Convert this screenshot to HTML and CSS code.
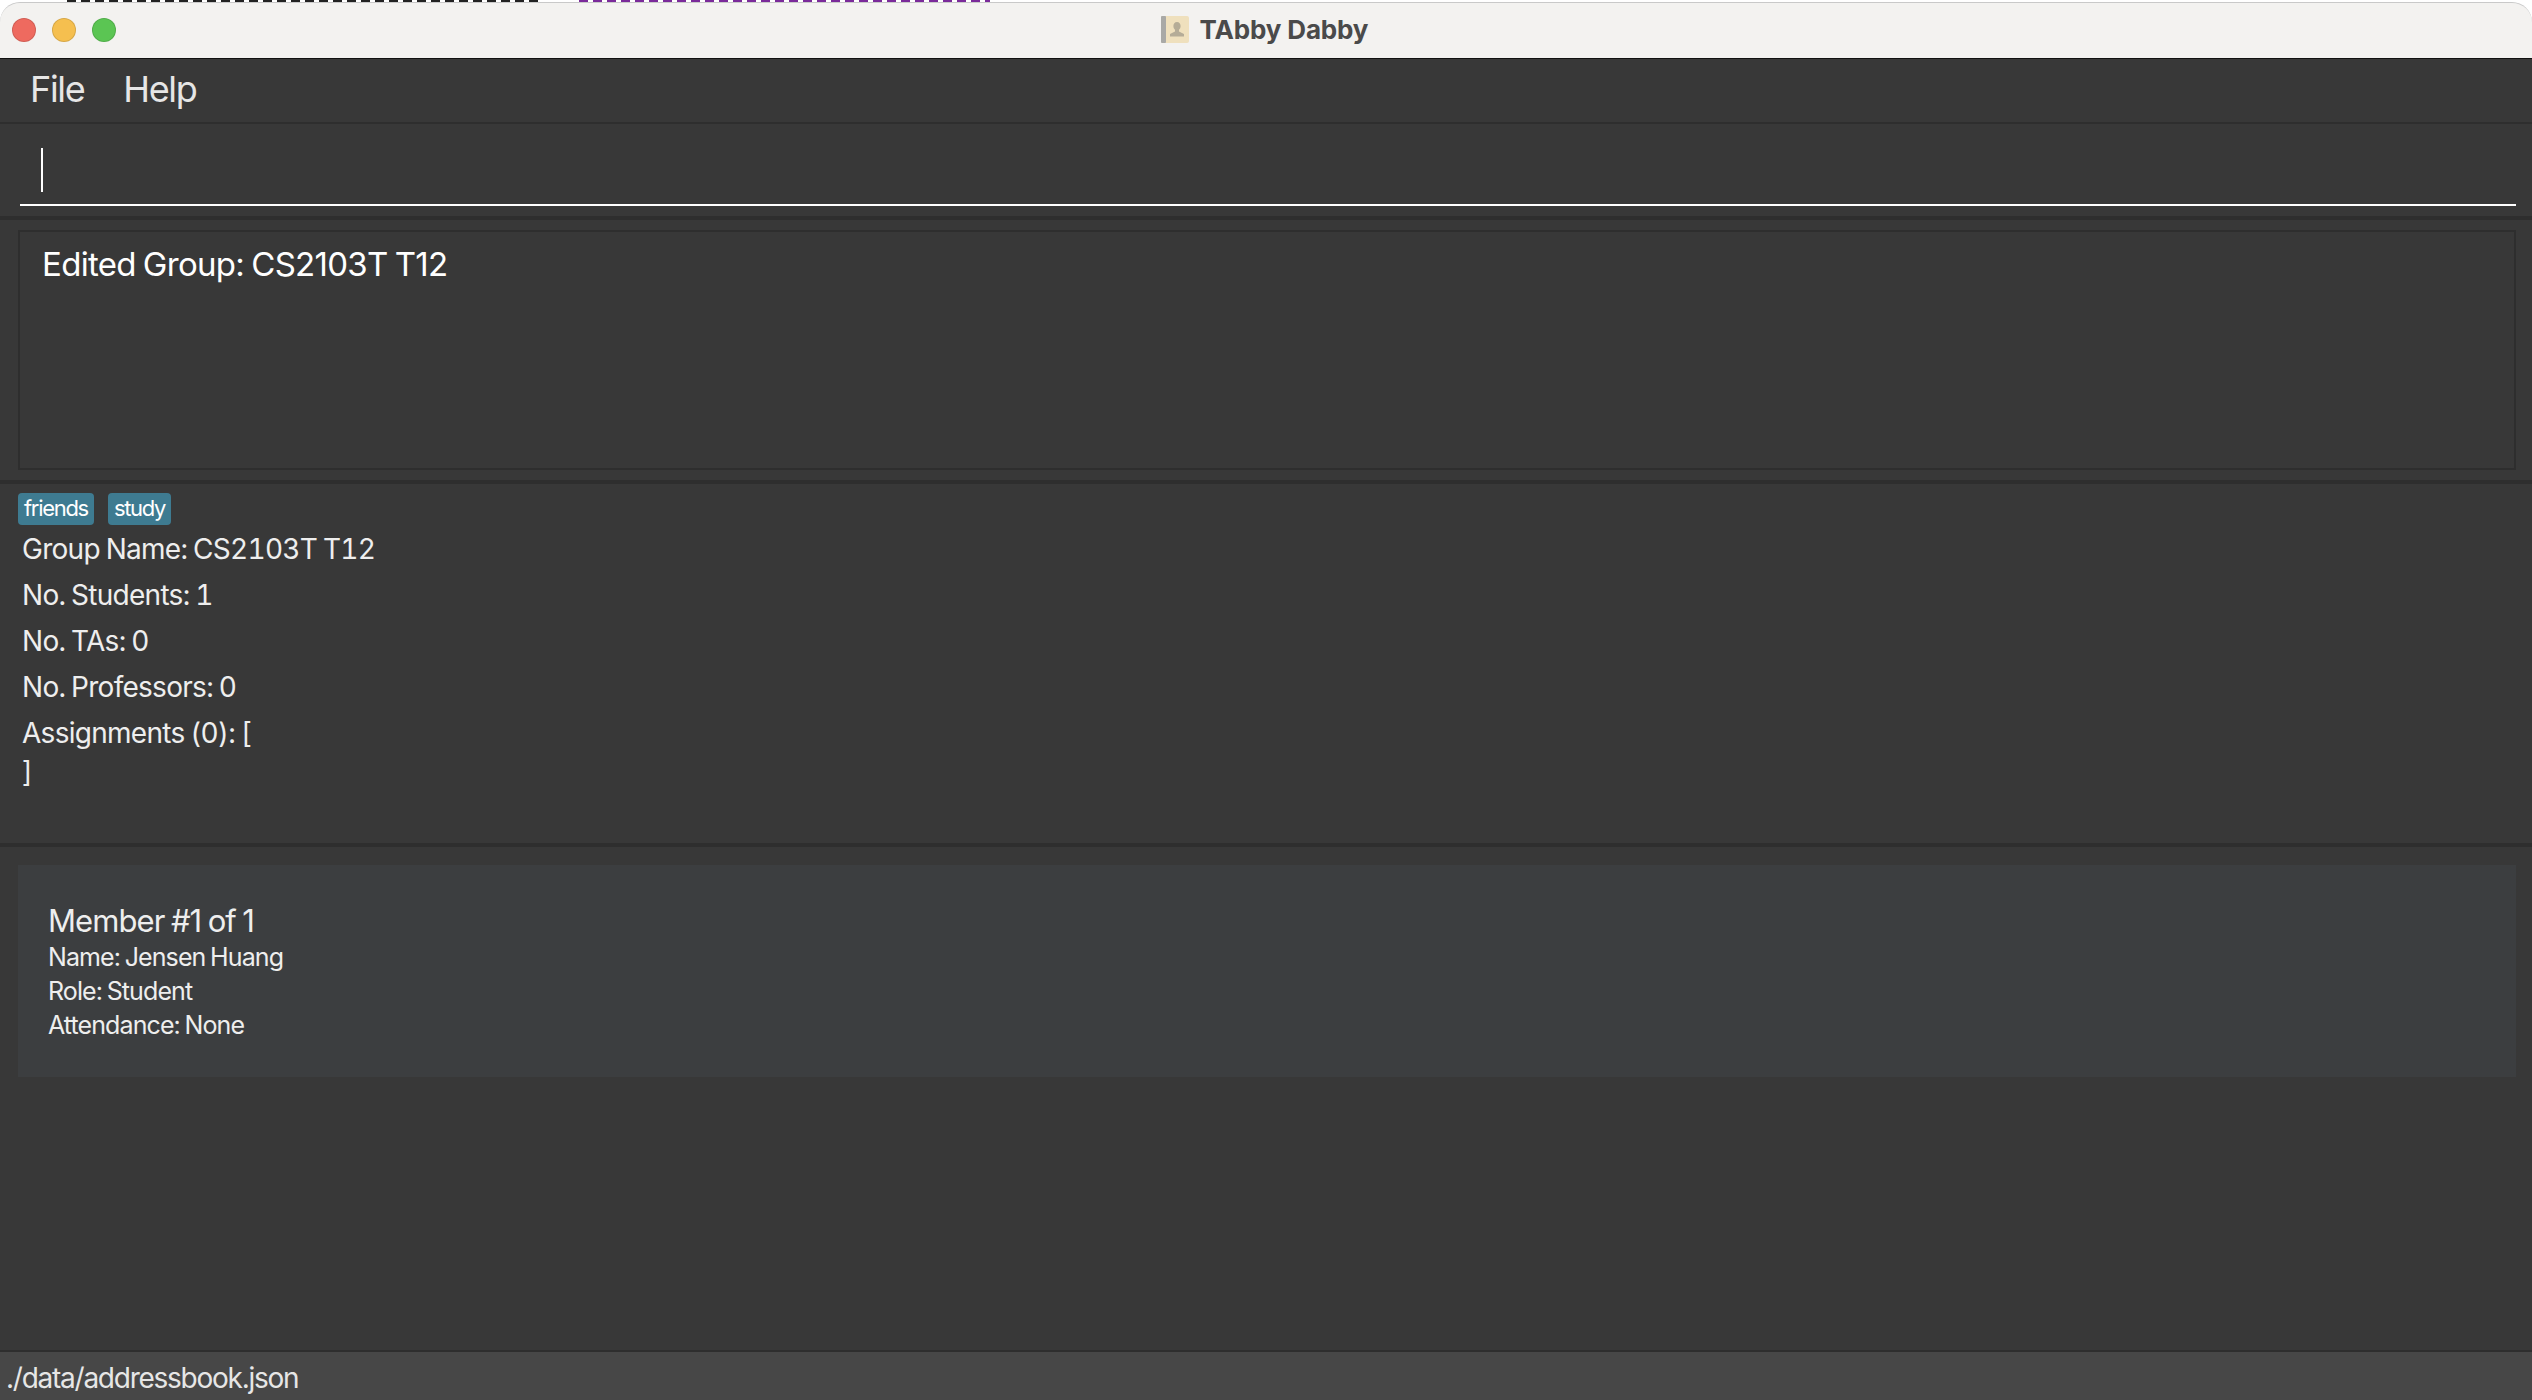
FILE: index.html
```html
<!DOCTYPE html>
<html lang="en">
<head>
    <meta charset="UTF-8">
    <title>TAbby Dabby</title>
    <link rel="stylesheet" href="styles.css">
</head>
<body>

    <div class="window">

        <!-- Sliver of the window behind -->
        <div class="backdrop"></div>

        <!-- Title bar -->
        <div class="title-bar">
            <div class="traffic-lights">
                <span class="light red"></span>
                <span class="light yellow"></span>
                <span class="light green"></span>
            </div>
            <div class="title">
                <svg class="title-icon" width="28" height="27" viewBox="0 0 28 27">
                    <rect x="0" y="0" width="28" height="27" rx="2" fill="#efe0bd"/>
                    <rect x="0" y="0" width="5" height="27" rx="1" fill="#a9a9a6"/>
                    <path d="M16 6c-2.300 0-3.600 1.800-3.600 4 0 1.700.7 3 1.600 3.800v1.700l-5 2.500v2.500h14v-2.500l-5-2.500v-1.700c.9-.8 1.600-2.100 1.600-3.800 0-2.200-1.300-4-3.600-4z" fill="#b5ac97"/>
                </svg>
                <span>TAbby Dabby</span>
            </div>
        </div>

        <div class="app-body">

            <!-- Menu -->
            <div class="menu-bar">
                <span class="menu-item">File</span>
                <span class="menu-item">Help</span>
            </div>

            <!-- Command box -->
            <div class="command-box">
                <div class="command-input"><span class="caret"></span></div>
            </div>

            <!-- Result -->
            <div class="result-section">
                <div class="result-box">Edited Group: CS2103T T12</div>
            </div>

            <!-- Group details -->
            <div class="group-section">
                <div class="tags">
                    <span class="tag">friends</span>
                    <span class="tag">study</span>
                </div>
                <div class="group-line">Group Name: CS2103T T12</div>
                <div class="group-line">No. Students: 1</div>
                <div class="group-line">No. TAs: 0</div>
                <div class="group-line">No. Professors: 0</div>
                <div class="group-line">Assignments (0): [<br>]</div>
            </div>

            <!-- Members -->
            <div class="member-section">
                <div class="member-card">
                    <div class="member-title">Member #1 of 1</div>
                    <div class="member-line">Name: Jensen Huang</div>
                    <div class="member-line">Role: Student</div>
                    <div class="member-line">Attendance: None</div>
                </div>
            </div>

            <!-- Status bar -->
            <div class="status-bar">./data/addressbook.json</div>

        </div>

    </div>

</body>
</html>
```

FILE: styles.css
```css
/* General page styling */
html, body {
    margin: 0;
    height: 100%;
}

body {
    background-color: #ffffff;
    overflow: hidden;
    font-family: Inter, "Liberation Sans", sans-serif;
    color: #eeeeee;
}

.window {
    display: flex;
    flex-direction: column;
    height: 1400px;
}

.backdrop {
    flex: none;
    height: 2px;
    background-image:
        repeating-linear-gradient(90deg, #222222 0 9px, transparent 9px 14px),
        repeating-linear-gradient(90deg, #7a2a9a 0 9px, transparent 9px 14px);
    background-size: 473px 2px, 411px 2px;
    background-position: 67px 0, 579px 0;
    background-repeat: no-repeat;
}

/* Title bar */
.title-bar {
    position: relative;
    display: flex;
    align-items: center;
    justify-content: center;
    flex: none;
    height: 57px;
    padding-bottom: 2px;
    background-color: #f3f2f0;
    border-top: 1px solid #c9c9c9;
    border-bottom: 1px solid #111111;
    box-sizing: border-box;
    border-radius: 20px 20px 0 0;
}

.traffic-lights {
    position: absolute;
    left: 12px;
    top: 15px;
    display: flex;
    gap: 16px;
}

.light {
    width: 24px;
    height: 24px;
    box-sizing: border-box;
    border-radius: 50%;
    border: 1px solid rgba(0, 0, 0, 0.12);
}

.light.red { background-color: #ee6a5f; }
.light.yellow { background-color: #f5bf4f; }
.light.green { background-color: #5bc553; }

.title {
    display: flex;
    align-items: center;
    gap: 11px;
    margin-left: -3px;
    font-size: 26px;
    font-weight: 700;
    letter-spacing: -0.15px;
    color: #4a4a4a;
}

.app-body {
    display: flex;
    flex: 1;
    flex-direction: column;
    background-color: #383838;
}

/* Menu */
.menu-bar {
    display: flex;
    flex: none;
    gap: 39px;
    box-sizing: border-box;
    height: 65px;
    padding: 0 30px 4px;
    align-items: center;
    font-size: 36px;
    letter-spacing: -1.35px;
    color: #e6e6e6;
    border-bottom: 2px solid #2e2e2e;
}

/* Command box */
.command-box {
    flex: none;
    box-sizing: border-box;
    height: 96px;
    padding: 0 16px 0 20px;
    border-bottom: 4px solid #2e2e2e;
}

.command-input {
    box-sizing: border-box;
    height: 82px;
    padding: 24px 0 0 21px;
    border-bottom: 2px solid #ffffff;
}

.caret {
    display: block;
    width: 2px;
    height: 44px;
    background-color: #ffffff;
}

/* Result */
.result-section {
    flex: none;
    box-sizing: border-box;
    height: 264px;
    padding: 10px 16px 10px 18px;
    border-bottom: 4px solid #2e2e2e;
}

.result-box {
    box-sizing: border-box;
    height: 240px;
    padding: 12px 22px;
    border: 2px solid #2e2e2e;
    font-size: 33px;
    letter-spacing: -0.7px;
    word-spacing: -1.5px;
    color: #ffffff;
}

/* Group details */
.group-section {
    flex: none;
    box-sizing: border-box;
    height: 363px;
    padding: 9px 18px 0;
    border-bottom: 4px solid #2e2e2e;
}

.tags {
    display: flex;
    gap: 14px;
    margin-bottom: 5px;
}

.tag {
    padding: 0 6px;
    line-height: 31px;
    height: 32px;
    font-size: 22px;
    letter-spacing: -1.3px;
    color: #ffffff;
    background-color: #3e7b91;
    border-radius: 4px;
}

.group-line {
    padding-left: 4px;
    margin-bottom: 7px;
    font-size: 28px;
    font-variant-numeric: tabular-nums;
    line-height: 39px;
    letter-spacing: -0.72px;
    word-spacing: -1px;
}

/* Members */
.member-section {
    flex: 1;
    padding: 18px 16px 0 18px;
}

.member-card {
    box-sizing: border-box;
    height: 212px;
    padding: 37px 30px;
    background-color: #3c3e40;
}

.member-title {
    font-size: 31px;
    line-height: 38px;
    letter-spacing: -0.9px;
    word-spacing: -1.5px;
}

.member-line {
    font-size: 25px;
    line-height: 34px;
    letter-spacing: -0.9px;
    word-spacing: -1.5px;
}

/* Status bar */
.status-bar {
    flex: none;
    box-sizing: border-box;
    height: 50px;
    padding: 0 6px;
    line-height: 52px;
    font-size: 28px;
    letter-spacing: -1.25px;
    background-color: #474747;
    border-top: 2px solid #2e2e2e;
    color: #e6e6e6;
}
```
